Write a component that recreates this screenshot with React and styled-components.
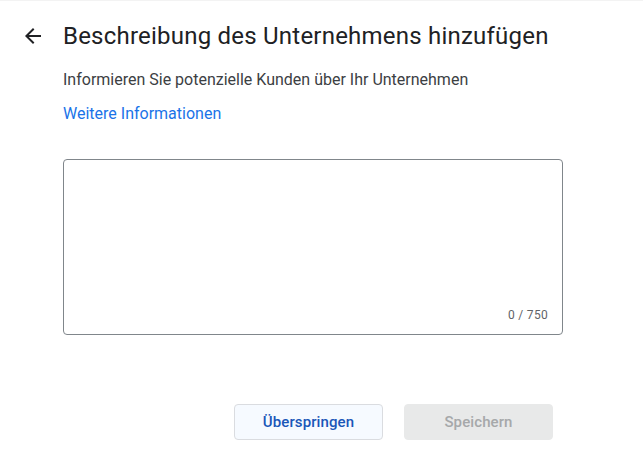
import React from "react";
import styled, { createGlobalStyle } from "styled-components";

const Global = createGlobalStyle`
  html, body { margin: 0; padding: 0; background: #fff; }
  body { font-family: Roboto, "Noto Sans", Arial, sans-serif; -webkit-font-smoothing: antialiased; }
  * { box-sizing: border-box; }
`;

const Page = styled.div`
  width: 643px;
  height: 472px;
  border-top: 1px solid #f3f3f3;
  display: flex;
  flex-direction: column;
`;

const Header = styled.div`
  display: flex;
  align-items: center;
  height: 30px;
  margin-top: 20px;
  padding-left: 21px;
`;

const BackButton = styled.button`
  width: 24px;
  height: 24px;
  padding: 0;
  border: 0;
  background: none;
  display: flex;
  align-items: center;
  justify-content: center;
  color: #202124;
  margin-right: 18px;
  cursor: pointer;
`;

const Title = styled.h1`
  margin: 0;
  font-size: 24px;
  line-height: 30px;
  font-weight: 400;
  color: #202124;
  letter-spacing: 0.22px;
`;

const Body = styled.div`
  padding-left: 63px;
  width: 563px;
  display: flex;
  flex-direction: column;
`;

const Subtitle = styled.p`
  margin: 19px 0 0;
  font-size: 16px;
  line-height: 20px;
  color: #3c4043;
`;

const Link = styled.a`
  margin-top: 14px;
  font-size: 16px;
  line-height: 20px;
  color: #1a73e8;
  text-decoration: none;
  align-self: flex-start;
`;

const Field = styled.div`
  margin-top: 35px;
  height: 176px;
  border: 1px solid #80868b;
  border-radius: 4px;
  display: flex;
  flex-direction: column;
  padding: 12px 14px 12px 16px;
`;

const TextArea = styled.textarea`
  flex: 1;
  border: 0;
  outline: none;
  resize: none;
  font-family: inherit;
  font-size: 14px;
  padding: 0;
`;

const Counter = styled.div`
  align-self: flex-end;
  font-size: 12px;
  color: #5f6368;
  letter-spacing: 0.3px;
`;

const Actions = styled.div`
  display: flex;
  justify-content: flex-end;
  gap: 21px;
  margin-top: 69px;
  padding-right: 10px;
`;

const Button = styled.button`
  width: 149px;
  height: 36px;
  border-radius: 4px;
  font-family: inherit;
  font-size: 15px;
  font-weight: 500;
  letter-spacing: 0.1px;
  border: 1px solid ${(p) => (p.$disabled ? "#e8e9e9" : "#dadce0")};
  background: ${(p) => (p.$disabled ? "#e8e9e9" : "#f6faff")};
  color: ${(p) => (p.$disabled ? "#a6a8aa" : "#1a56b8")};
  cursor: ${(p) => (p.$disabled ? "default" : "pointer")};
`;

export default function App() {
  return (
    <>
      <Global />
      <Page>
        <Header>
          <BackButton aria-label="Zurück">
            <svg width="24" height="24" viewBox="0 0 24 24">
              <path
                fill="currentColor"
                d="M20 11H7.83l5.59-5.59L12 4l-8 8 8 8 1.41-1.41L7.83 13H20v-2z"
              />
            </svg>
          </BackButton>
          <Title>Beschreibung des Unternehmens hinzufügen</Title>
        </Header>
        <Body>
          <Subtitle>Informieren Sie potenzielle Kunden über Ihr Unternehmen</Subtitle>
          <Link href="#">Weitere Informationen</Link>
          <Field>
            <TextArea aria-label="Beschreibung" />
            <Counter>0 / 750</Counter>
          </Field>
          <Actions>
            <Button>Überspringen</Button>
            <Button $disabled>Speichern</Button>
          </Actions>
        </Body>
      </Page>
    </>
  );
}
